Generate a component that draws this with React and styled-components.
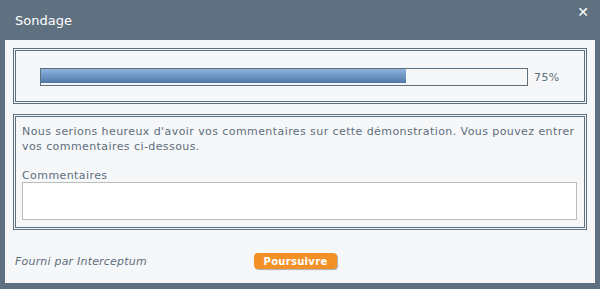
import React from "react";
import styled, { createGlobalStyle } from "styled-components";

const Global = createGlobalStyle`
  html, body { margin: 0; padding: 0; background: #5f7180; }
  body { font-family: "DejaVu Sans", Verdana, sans-serif; }
`;

const Dialog = styled.div`
  width: 600px;
  height: 289px;
  background: #5f7180;
  box-sizing: border-box;
  padding: 0 5px 6px 5px;
  display: flex;
  flex-direction: column;
  position: relative;
`;

const TitleBar = styled.div`
  height: 40px;
  display: flex;
  align-items: center;
  padding-left: 10px;
  color: #ffffff;
  font-size: 13px;
`;

const Close = styled.button`
  position: absolute;
  top: 4px;
  right: 11px;
  border: none;
  background: none;
  color: #fff;
  font-size: 14px;
  padding: 0;
  cursor: pointer;
  font-family: "DejaVu Sans", sans-serif;
`;

const Body = styled.div`
  flex: 1;
  background: #f5f7f9;
  padding: 8px 8px 0 8px;
  display: flex;
  flex-direction: column;
  gap: 10px;
`;

const Box = styled.div`
  border: 3px double #5d6e7c;
  padding: ${(p) => p.$pad};
`;

const ProgressRow = styled.div`
  display: flex;
  align-items: center;
  gap: 6px;
`;

const Track = styled.div`
  width: 486px;
  height: 15px;
  border: 1px solid #5d6e7c;
  background: #f5f7f9;
  padding-bottom: 1px;
`;

const Fill = styled.div`
  height: 14px;
  background: linear-gradient(#8db4dc, #6b93c3 55%, #4f75a6);
`;

const Pct = styled.span`
  font-size: 11px;
  letter-spacing: 0.4px;
  color: #5d6e7c;
`;

const Para = styled.p`
  margin: 0;
  font-size: 11px;
  letter-spacing: 0.42px;
  line-height: 15px;
  color: #5d6e7c;
`;

const Label = styled.div`
  margin-top: 15px;
  font-size: 11px;
  letter-spacing: 0.42px;
  line-height: 13px;
  color: #5d6e7c;
`;

const TextArea = styled.textarea`
  display: block;
  width: 555px;
  height: 38px;
  box-sizing: border-box;
  border: 1px solid #bcbcbc;
  background: #fff;
  resize: none;
  margin: 0;
`;

const Footer = styled.div`
  display: flex;
  align-items: center;
  padding: 13px 0 0 2px;
`;

const Credit = styled.span`
  font-size: 11px;
  font-style: italic;
  letter-spacing: 0.2px;
  color: #5d6e7c;
  width: 239px;
`;

const Button = styled.button`
  width: 83px;
  height: 16px;
  border: none;
  border-radius: 4px;
  background: #f39127;
  color: #fff;
  font-weight: bold;
  font-size: 10px;
  letter-spacing: 0.3px;
  font-family: "DejaVu Sans", Verdana, sans-serif;
  padding: 0;
  box-shadow: 1px 1px 1px rgba(0, 0, 0, 0.3);
`;

export default function App() {
  const pct = 75;
  return (
    <>
      <Global />
      <Dialog>
        <TitleBar>Sondage</TitleBar>
        <Close aria-label="Fermer">✕</Close>
        <Body>
          <Box $pad="17px 0 15px 24px">
            <ProgressRow>
              <Track>
                <Fill style={{ width: `${pct}%` }} />
              </Track>
              <Pct>{pct}%</Pct>
            </ProgressRow>
          </Box>
          <Box $pad="7px 6px 7px 6px">
            <Para>
              Nous serions heureux d'avoir vos commentaires sur cette démonstration. Vous pouvez entrer vos
              commentaires ci-dessous.
            </Para>
            <Label>Commentaires</Label>
            <TextArea />
          </Box>
          <Footer>
            <Credit>Fourni par Interceptum</Credit>
            <Button>Poursuivre</Button>
          </Footer>
        </Body>
      </Dialog>
    </>
  );
}
